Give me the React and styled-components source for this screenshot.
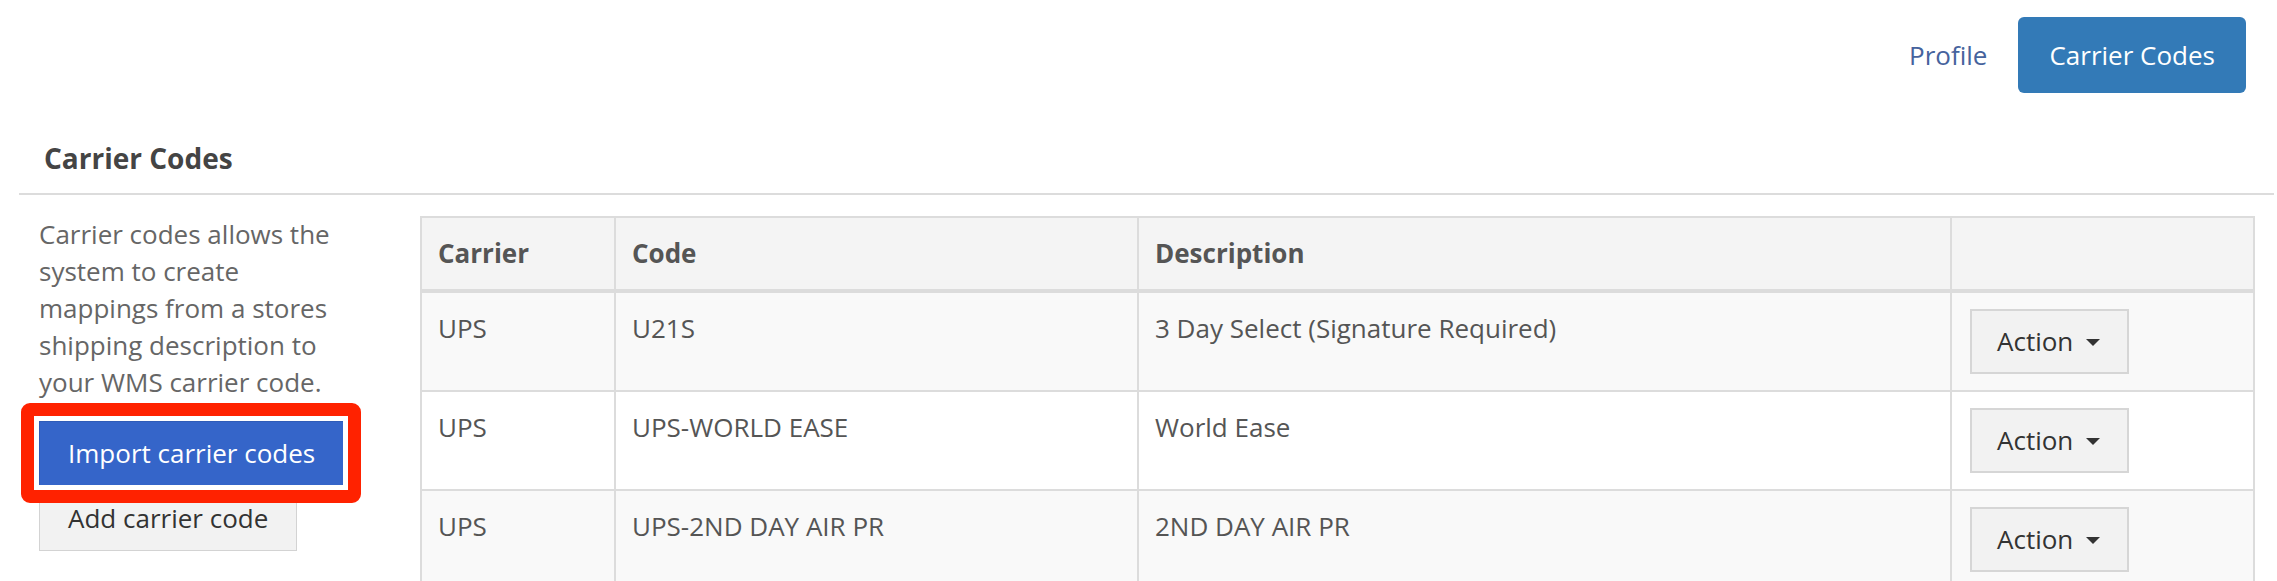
import React from 'react'
import styled, { createGlobalStyle } from 'styled-components'

const GlobalStyle = createGlobalStyle`
  html, body {
    margin: 0;
    padding: 0;
    background: #fff;
  }
  body {
    font-family: "Open Sans", "Liberation Sans", sans-serif;
    font-size: 26px;
    line-height: 37px;
    color: #555;
  }
`

const Page = styled.div`
  width: 2277px;
  box-sizing: border-box;
  padding: 0 3px 0 19px;
`

const TopNav = styled.nav`
  display: flex;
  justify-content: flex-end;
  align-items: center;
  padding: 17px 28px 0 0;
`

const NavItem = styled.a`
  display: flex;
  align-items: center;
  height: 76px;
  padding: 0 31px;
  border-radius: 6px;
  font-size: 26px;
  text-decoration: none;
  color: ${p => (p.active ? '#fff' : '#46639d')};
  background: ${p => (p.active ? '#337ab7' : 'transparent')};
`

const Title = styled.h3`
  margin: 45px 0 15px;
  padding-left: 25px;
  font-size: 28px;
  line-height: 40px;
  font-weight: 700;
  color: #444;
`

const Rule = styled.hr`
  margin: 0;
  border: 0;
  border-top: 2px solid #dcdcdc;
`

const Body = styled.div`
  display: flex;
  align-items: flex-start;
  padding: 21px 19px 0 20px;
`

const Side = styled.aside`
  flex: 0 0 310px;
  margin-right: 71px;
`

const Blurb = styled.p`
  margin: 0 0 20px;
  color: #666;
`

const ButtonStack = styled.div`
  display: flex;
  flex-direction: column;
  align-items: flex-start;
`

const Highlight = styled.div`
  position: relative;
  display: inline-flex;

  &::after {
    content: '';
    position: absolute;
    top: -18px;
    left: -18px;
    right: -17px;
    bottom: -17px;
    border: 13px solid #ff2200;
    border-radius: 9px;
    box-shadow: inset 0 0 0 5px #fff;
    pointer-events: none;
  }
`

const Button = styled.button`
  font-family: inherit;
  font-size: 26px;
  line-height: 37px;
  padding: 13px 28px;
  white-space: nowrap;
  border: 1px solid ${p => (p.primary ? '#2f5cb8' : '#d3d3d3')};
  border-radius: 0;
  color: ${p => (p.primary ? '#fff' : '#333')};
  background: ${p => (p.primary ? '#3565c9' : '#f2f2f2')};
  cursor: pointer;
`

const Table = styled.table`
  width: 1835px;
  flex: 0 0 1835px;
  table-layout: fixed;
  border-collapse: collapse;
  border: 2px solid #dcdcdc;
`

const Col = styled.col`
  width: ${p => (p.w ? `${p.w}px` : 'auto')};
`

const Th = styled.th`
  padding: 17px 16px;
  text-align: left;
  font-weight: 700;
  color: #555;
  background: #f4f4f4;
  border: 2px solid #dcdcdc;
  border-bottom-width: 4px;
`

const Row = styled.tr`
  background: ${p => (p.striped ? '#f9f9f9' : '#fff')};
`

const Td = styled.td`
  padding: 16px 16px 16px;
  vertical-align: top;
  color: #555;
  border: 2px solid #dcdcdc;
`

const TextTd = styled(Td)`
  padding-top: 17px;
`

const ActionButton = styled.button`
  display: inline-flex;
  align-items: center;
  gap: 13px;
  margin-left: 2px;
  padding: 12px 27px 12px 25px;
  font-family: inherit;
  font-size: 26px;
  line-height: 37px;
  color: #333;
  background: #f2f2f2;
  border: 2px solid #d6d6d6;
  border-radius: 0;
`

const Caret = styled.span`
  width: 0;
  height: 0;
  border-left: 7px solid transparent;
  border-right: 7px solid transparent;
  border-top: 7px solid #333;
  margin-top: 2px;
`

const rows = [
  { carrier: 'UPS', code: 'U21S', description: '3 Day Select (Signature Required)' },
  { carrier: 'UPS', code: 'UPS-WORLD EASE', description: 'World Ease' },
  { carrier: 'UPS', code: 'UPS-2ND DAY AIR PR', description: '2ND DAY AIR PR' }
]

export default function App () {
  return (
    <Page>
      <GlobalStyle />
      <TopNav>
        <NavItem href="#">Profile</NavItem>
        <NavItem href="#" active>Carrier Codes</NavItem>
      </TopNav>
      <Title>Carrier Codes</Title>
      <Rule />
      <Body>
        <Side>
          <Blurb>
            Carrier codes allows the system to create mappings from a stores
            shipping description to your WMS carrier code.
          </Blurb>
          <ButtonStack>
            <Highlight>
              <Button primary>Import carrier codes</Button>
            </Highlight>
            <Button>Add carrier code</Button>
          </ButtonStack>
        </Side>
        <Table>
          <colgroup>
            <Col w={194} />
            <Col w={523} />
            <Col w={813} />
            <Col />
          </colgroup>
          <thead>
            <tr>
              <Th>Carrier</Th>
              <Th>Code</Th>
              <Th>Description</Th>
              <Th />
            </tr>
          </thead>
          <tbody>
            {rows.map((r, i) => (
              <Row key={r.code} striped={i % 2 === 0}>
                <TextTd>{r.carrier}</TextTd>
                <TextTd>{r.code}</TextTd>
                <TextTd>{r.description}</TextTd>
                <Td>
                  <ActionButton>
                    Action <Caret />
                  </ActionButton>
                </Td>
              </Row>
            ))}
          </tbody>
        </Table>
      </Body>
    </Page>
  )
}
